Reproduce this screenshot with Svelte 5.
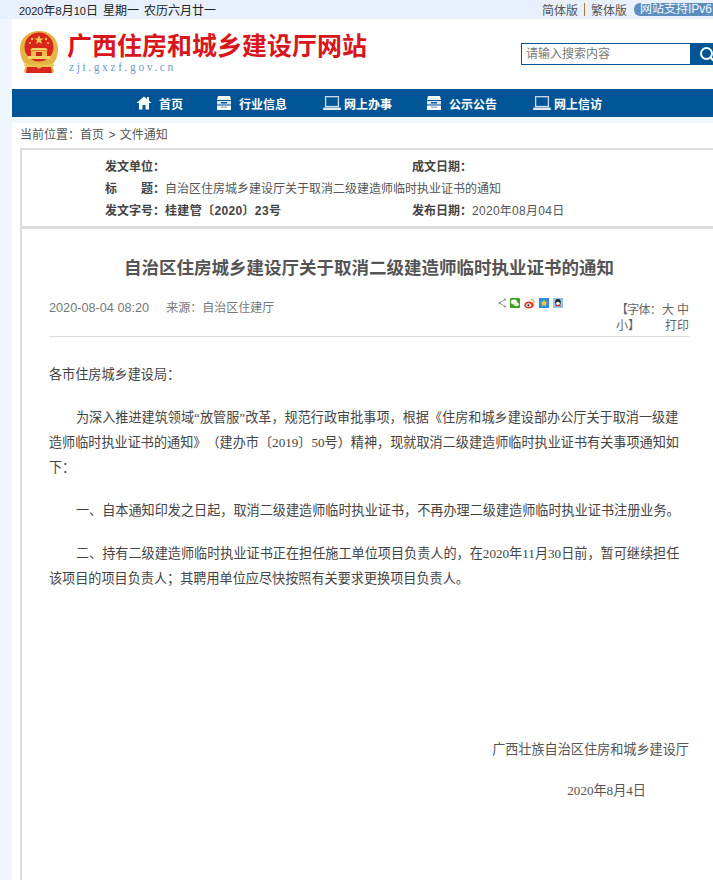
<script>
  const nav = [
    { label: '首页', icon: 'home' },
    { label: '行业信息', icon: 'drawer' },
    { label: '网上办事', icon: 'pc' },
    { label: '公示公告', icon: 'drawer' },
    { label: '网上信访', icon: 'pc' }
  ];
</script>

<div class="page">
  <div class="topbar">
    <div class="date"><span class="d">2020</span>年<span class="d">8</span>月<span class="d">10</span>日<span class="w">星期一</span><span class="w">农历六月廿一</span></div>
    <div class="langs">
      <span>简体版</span><i class="sep"></i><span>繁体版</span>
      <span class="ipv6">网站支持IPv6</span>
    </div>
  </div>

  <div class="wrap">
    <header class="head">
      <div class="brand">
        <svg class="emblem" width="40" height="44" viewBox="0 0 40 44">
          <path d="M20 1C9 1 1 8 1 19c0 8 3 13 6 16l-2 6c0 1 1 2 2 2h26c1 0 2-1 2-2l-2-6c3-3 6-8 6-16C39 8 31 1 20 1z" fill="#e5b445"/>
          <circle cx="20" cy="17" r="14.500" fill="#d9261c"/>
          <path d="M20 5l1.200 3.400h3.600l-2.900 2.200 1.100 3.500-3-2.100-3 2.100 1.100-3.500-2.900-2.200h3.600z" fill="#f3c94a"/>
          <circle cx="13" cy="9" r="1.200" fill="#f3c94a"/><circle cx="27" cy="9" r="1.200" fill="#f3c94a"/>
          <circle cx="11" cy="13" r="1.100" fill="#f3c94a"/><circle cx="29" cy="13" r="1.100" fill="#f3c94a"/>
          <path d="M13 18h14l2 2.500H11z" fill="#f5d465"/>
          <path d="M12 21h16v5H12z" fill="#eec04a"/>
          <path d="M9 26h22v3H9z" fill="#f5d465"/>
          <path d="M17 22h6v4h-6z" fill="#c8281c"/>
          <path d="M6 33c8 3 20 3 28 0l1 3c-9 4-21 4-30 0z" fill="#f0c850"/>
          <path d="M8 37h24l1 6H7z" fill="#d9261c"/>
          <circle cx="20" cy="36" r="2.500" fill="#eec04a"/>
        </svg>
        <div>
          <h1>广西住房和城乡建设厅网站</h1>
          <div class="domain">zjt.gxzf.gov.cn</div>
        </div>
      </div>
      <div class="search">
        <span class="ph">请输入搜索内容</span>
        <span class="sbtn">
          <svg width="16" height="16" viewBox="0 0 16 16"><circle cx="7.500" cy="7.500" r="5.500" fill="none" stroke="#fff" stroke-width="2"/><path d="M11.500 11.500l4 4" stroke="#fff" stroke-width="2"/></svg>
        </span>
      </div>
    </header>

    <nav class="nav">
      {#each nav as n}
        <a class="navitem {n.icon}">
          {#if n.icon === 'home'}
            <svg width="16" height="14" viewBox="0 0 16 14"><path d="M8 0.500L0.500 7H3v6.500h3.500V9h3v4.500H13V7h2.500L13 4.800V1h-2v2.100z" fill="#fff"/></svg>
          {:else if n.icon === 'drawer'}
            <svg width="16" height="14" viewBox="0 0 16 14"><path d="M2 0h12l1 4H1z" fill="#f4f7fa"/><path d="M1 5h14v3.500H1z" fill="#dbe5ee"/><path d="M5 6h6v1.500H5z" fill="#005596"/><path d="M1 9.500h14V14H1z" fill="#fff"/><path d="M5 10.500h6V12H5z" fill="#9fb9d0"/></svg>
          {:else}
            <svg width="18" height="14" viewBox="0 0 18 14"><rect x="2.600" y="0.700" width="12.800" height="9.800" fill="none" stroke="#cfdde9" stroke-width="1.300"/><path d="M0.500 11.500h17l.5 2.500H0z" fill="#dfe9f1"/></svg>
          {/if}
          <span>{n.label}</span>
        </a>
      {/each}
    </nav>
  </div>

  <div class="gap"></div>

  <main class="content">
    <div class="crumb">当前位置：<span>首页</span> <em>&gt;</em> <span>文件通知</span></div>

    <div class="box">
      <section class="meta">
        <div class="m"><b>发文单位：</b></div>
        <div class="m"><b>成文日期：</b></div>
        <div class="m full"><b class="spaced"><span>标</span><span>题：</span></b>自治区住房城乡建设厅关于取消二级建造师临时执业证书的通知</div>
        <div class="m"><b>发文字号：</b><b class="val">桂建管〔2020〕23号</b></div>
        <div class="m"><b>发布日期：</b><span class="pub">2020年08月04日</span></div>
      </section>

      <article class="article">
        <h2>自治区住房城乡建设厅关于取消二级建造师临时执业证书的通知</h2>
        <div class="info">
          <div class="src"><span class="time">2020-08-04 08:20</span><span>来源：自治区住建厅</span></div>
          <div class="share">
            <svg width="8" height="10" viewBox="0 0 8 10"><path d="M7 1.500L1.500 5 7 8.500" fill="none" stroke="#888" stroke-width="0.800"/><circle cx="7" cy="1.500" r="1" fill="#888"/><circle cx="1.500" cy="5" r="1" fill="#888"/><circle cx="7" cy="8.500" r="1" fill="#888"/></svg>
            <svg width="10" height="10" viewBox="0 0 10 10"><rect width="10" height="10" rx="1" fill="#3ea31c"/><ellipse cx="4" cy="4" rx="3" ry="2.400" fill="#fff"/><ellipse cx="6.500" cy="6.200" rx="2.500" ry="2" fill="#e8f5e0"/></svg>
            <svg width="11" height="11" viewBox="0 0 11 11"><ellipse cx="5" cy="7" rx="4.800" ry="3.600" fill="#e03a2c"/><ellipse cx="4.600" cy="7.200" rx="2.500" ry="1.900" fill="#fff"/><circle cx="4.400" cy="7.300" r="1.100" fill="#222"/><path d="M7 1.500c2 0 3.400 1.600 3 3.600" fill="none" stroke="#f0a030" stroke-width="1.200"/></svg>
            <svg width="10" height="10" viewBox="0 0 11 11"><rect width="11" height="11" fill="#2b8fdc"/><path d="M5.500 1.500l1.200 2.700 2.900.3-2.200 1.900.7 2.900-2.600-1.500-2.600 1.500.7-2.900L1.400 4.500l2.900-.3z" fill="#f6c93c"/></svg>
            <svg width="10" height="10" viewBox="0 0 11 11"><rect width="11" height="11" fill="#8fc4e6"/><ellipse cx="5.500" cy="4.500" rx="3" ry="3.500" fill="#222"/><ellipse cx="5.500" cy="6" rx="2" ry="2" fill="#fff"/><path d="M2.500 7.500h6V9h-6z" fill="#d8302a"/></svg>
          </div>
          <div class="tools">
            <span class="font">【字体：</span><span>大</span><span>中</span><span>小】</span><span class="print">打印</span>
          </div>
        </div>

        <div class="body">
          <p>各市住房城乡建设局：</p>
          <p class="in">为深入推进建筑领域“放管服”改革，规范行政审批事项，根据《住房和城乡建设部办公厅关于取消一级建造师临时执业证书的通知》（建办市〔2019〕50号）精神，现就取消二级建造师临时执业证书有关事项通知如下：</p>
          <p class="in">一、自本通知印发之日起，取消二级建造师临时执业证书，不再办理二级建造师临时执业证书注册业务。</p>
          <p class="in">二、持有二级建造师临时执业证书正在担任施工单位项目负责人的，在2020年11月30日前，暂可继续担任该项目的项目负责人；其聘用单位应尽快按照有关要求更换项目负责人。</p>
          <p class="sign">广西壮族自治区住房和城乡建设厅</p>
          <p class="date2">2020年8月4日</p>
        </div>
      </article>
    </div>
  </main>
</div>

<style>
  :global(body) {
    margin: 0;
    background: #f0f6fe;
    font-family: "Liberation Sans", "Noto Sans CJK SC", sans-serif;
    overflow: hidden;
  }
  .page { width: 713px; height: 880px; overflow: hidden; color: #555; font-size: 12px; }

  .topbar {
    height: 19px;
    background: #e8f0fb;
    display: flex;
    justify-content: space-between;
    align-items: center;
    padding-left: 19px;
    color: #222;
    white-space: nowrap;
  }
  .d { font-size: 11px; }
  .w { margin-left: 5px; }
  .langs { display: flex; align-items: center; color: #555; }
  .sep { width: 1px; height: 13px; background: #b5793a; margin: 0 6px 0 6px; }
  .ipv6 {
    margin-left: 7px;
    background: #5d8fbe;
    color: #f2f6fa;
    border-radius: 6px 0 0 6px;
    padding: 0 1px 0 6px;
    height: 13px;
    line-height: 13px;
  }

  .wrap { margin-left: 12px; background: #fff; }
  .head {
    height: 70px;
    display: flex;
    justify-content: space-between;
    align-items: flex-start;
  }
  .brand { display: flex; margin-left: 7px; margin-top: 11px; gap: 8px; }
  h1 {
    margin: -1px 0 0;
    font: bold 25px/30px "Noto Sans CJK SC", sans-serif;
    color: #d9161c;
    white-space: nowrap;
  }
  .domain {
    font: 11.5px/14px "Liberation Serif", serif;
    letter-spacing: 2.600px;
    color: #6d9cc7;
    margin: 1px 0 0 2px;
  }
  .search {
    margin: 24px -18px 0 0;
    width: 210px;
    flex-shrink: 0;
    height: 22px;
    box-sizing: border-box;
    border: 1px solid #005596;
    display: flex;
    align-items: center;
  }
  .ph { flex: 1; padding-left: 4px; color: #777; line-height: 20px; }
  .sbtn {
    width: 40px;
    height: 20px;
    box-sizing: border-box;
    background: #005596;
    display: flex;
    align-items: center;
    padding-left: 9px;
  }

  .nav {
    height: 28px;
    background: #005596;
    display: flex;
    align-items: center;
    padding-left: 124px;
    gap: 33px;
  }
  .navitem {
    display: flex;
    align-items: center;
    gap: 7px;
    color: #fff;
    font-weight: bold;
    white-space: nowrap;
  }
  .navitem.pc { gap: 3px; margin-left: 3px; margin-right: 1px; }

  .gap { height: 6px; }

  .content { margin-left: 12px; background: #fff; height: 757px; }
  .crumb {
    height: 25px;
    line-height: 25px;
    padding-left: 8px;
    white-space: nowrap;
  }
  .crumb em { font-style: normal; margin: 0 1px; }

  .box {
    margin-left: 8px;
    height: 732px;
    border-top: 2px solid #ddd;
    border-left: 2px solid #ddd;
  }
  .meta {
    height: 79px;
    display: grid;
    grid-template-columns: 307px 1fr;
    grid-auto-rows: 22px;
    padding-left: 83px;
    padding-top: 6px;
    box-sizing: border-box;
    border-bottom: 3px solid #ddd;
    align-items: center;
    line-height: 22px;
    text-spacing-trim: space-all;
  }
  .m { white-space: nowrap; }
  .m b { color: #444; }
  .full { grid-column: 1 / -1; display: flex; }
  .spaced { display: inline-flex; justify-content: space-between; width: 60px; }
  .pub { letter-spacing: 0.280px; }
  .val { letter-spacing: 0.350px; }

  .article { padding: 0 24px 0 27px; }
  h2 {
    margin: 0;
    padding-top: 25px;
    text-align: center;
    font: bold 17.500px/26px "Noto Sans CJK SC", sans-serif;
    color: #555;
    white-space: nowrap;
  }
  .info {
    margin-top: 15px;
    height: 41px;
    border-bottom: 1px solid #ddd;
    display: flex;
    color: #777;
  }
  .src { display: flex; gap: 17px; width: 449px; line-height: 18px; padding-top: 4px; white-space: nowrap; }
  .time { font-size: 12.700px; }
  .share { display: flex; gap: 4px; align-items: flex-start; width: 118px; padding-top: 3px; }
  .tools {
    width: 73px;
    display: grid;
    grid-template-columns: 45px 13px 15px;
    grid-auto-rows: 16px;
    line-height: 16px;
    padding-top: 7px;
    white-space: nowrap;
    color: #666;
    text-align: right;
  }
  .tools span:first-child, .tools span:nth-child(4) { text-align: left; }
  .font { letter-spacing: -0.750px; }
  .print { grid-column: 2 / 4; }

  .body {
    font-family: "Liberation Serif", "Noto Sans CJK SC", serif;
    font-size: 13.130px;
    line-height: 25px;
    color: #444;
    padding-top: 25px;
    text-spacing-trim: space-all;
  }
  .body p { margin: 0 0 18px; }
  .body .in { text-indent: 27px; }
  .body .sign { text-align: right; margin: 146px 0 16px; color: #555; }
  .body .date2 { text-align: right; padding-right: 43px; color: #555; }
</style>
